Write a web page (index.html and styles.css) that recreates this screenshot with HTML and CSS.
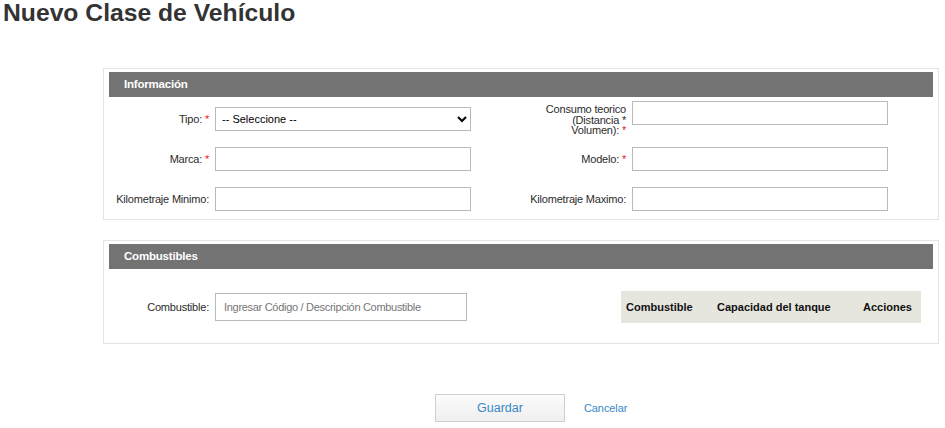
FILE: index.html
```html
<!DOCTYPE html>
<html lang="es">
<head>
<meta charset="utf-8">
<title>Nuevo Clase de Vehículo</title>
<link rel="stylesheet" href="styles.css">
</head>
<body>
<h1 class="title">Nuevo Clase de Vehículo</h1>

<section class="panel panel-info">
  <div class="panel-head">Información</div>
  <div class="form-grid">
    <div class="field field-bottom">
      <label class="lbl">Tipo: <span class="req">*</span></label>
      <select class="ctl">
        <option>-- Seleccione --</option>
      </select>
    </div>
    <div class="field field-top">
      <label class="lbl lbl-multi">Consumo teorico<br>(Distancia *<br>Volumen): <span class="req">*</span></label>
      <input class="ctl" type="text">
    </div>
    <div class="field">
      <label class="lbl">Marca: <span class="req">*</span></label>
      <input class="ctl" type="text">
    </div>
    <div class="field">
      <label class="lbl">Modelo: <span class="req">*</span></label>
      <input class="ctl" type="text">
    </div>
    <div class="field">
      <label class="lbl">Kilometraje Minimo:</label>
      <input class="ctl" type="text">
    </div>
    <div class="field">
      <label class="lbl">Kilometraje Maximo:</label>
      <input class="ctl" type="text">
    </div>
  </div>
</section>

<section class="panel panel-fuel">
  <div class="panel-head">Combustibles</div>
  <div class="fuel-body">
    <div class="field">
      <label class="lbl">Combustible:</label>
      <input class="ctl ctl-fuel" type="text" placeholder="Ingresar Código / Descripción Combustible">
    </div>
    <table class="fuel-table">
      <thead>
        <tr>
          <th class="c1">Combustible</th>
          <th class="c2">Capacidad del tanque</th>
          <th class="c3">Acciones</th>
        </tr>
      </thead>
    </table>
  </div>
</section>

<div class="actions">
  <button class="btn-save" type="button">Guardar</button>
  <a class="link-cancel" href="#">Cancelar</a>
</div>
</body>
</html>
```

FILE: styles.css
```css
* { box-sizing: border-box; }

body {
  margin: 0;
  background: #fff;
  font-family: "Liberation Sans", Arial, sans-serif;
  font-size: 11px;
  color: #2b2b2b;
}

.title {
  margin: 0 0 0 3px;
  font-family: "Liberation Sans", Arial, sans-serif;
  font-size: 24.7px;
  line-height: 25px;
  font-weight: bold;
  color: #333;
}

.panel {
  margin-left: 103px;
  width: 836px;
  border: 1px solid #e5e5dd;
  padding: 3px 5px 0;
}

.panel-info { margin-top: 43px; }
.panel-fuel { margin-top: 20px; }

.panel-head {
  height: 25px;
  line-height: 25px;
  padding-left: 15px;
  background: #737373;
  color: #fff;
  font-weight: bold;
  font-size: 11.5px;
  letter-spacing: -0.2px;
}

.form-grid {
  display: grid;
  grid-template-columns: 362px 362px;
  grid-template-rows: 30px 24px 24px;
  column-gap: 55px;
  row-gap: 16px;
  padding: 4px 0 8px;
}

.field {
  display: flex;
  align-items: center;
}

.field-bottom { align-items: flex-end; }
.field-bottom .lbl { line-height: 24px; }
.field-top { align-items: flex-start; }

.lbl {
  width: 100px;
  margin-right: 6px;
  text-align: right;
  white-space: nowrap;
  color: #2b2b2b;
  letter-spacing: -0.2px;
}

.lbl-multi {
  line-height: 10.5px;
  margin-top: 3px;
}

.req { color: #e8141b; }

.ctl {
  width: 256px;
  height: 24px;
  border: 1px solid #b9b9b9;
  background: #fff;
  font-family: "Liberation Sans", Arial, sans-serif;
  font-size: 11px;
  color: #000;
  padding: 0 4px;
  margin: 0;
  border-radius: 0;
  outline: none;
}

select.ctl { padding-left: 2px; }

.ctl-fuel {
  width: 252px;
  height: 28px;
  padding-left: 8px;
  letter-spacing: -0.3px;
}

.ctl-fuel::placeholder { color: #777; }

.fuel-body {
  display: flex;
  align-items: center;
  justify-content: space-between;
  padding: 22px 12px 20px 0;
}

.fuel-table {
  border-collapse: collapse;
  background: #e6e6df;
}

.fuel-table th {
  height: 32px;
  padding: 0 0 0 5px;
  text-align: left;
  font-weight: bold;
  font-size: 11px;
  color: #111;
  white-space: nowrap;
}

.fuel-table .c1 { width: 91px; }
.fuel-table .c2 { width: 146px; }
.fuel-table .c3 { width: 63px; }

.actions {
  display: flex;
  align-items: center;
  gap: 19px;
  margin: 50px 0 0 435px;
}

.btn-save {
  width: 130px;
  height: 28px;
  border: 1px solid #cfcfcf;
  background: linear-gradient(#fbfbfb, #efefef);
  color: #3a87c8;
  font-family: "Liberation Sans", Arial, sans-serif;
  font-size: 12.5px;
  cursor: pointer;
}

.link-cancel {
  color: #3a87c8;
  text-decoration: none;
  font-size: 11px;
  letter-spacing: -0.1px;
}
```
